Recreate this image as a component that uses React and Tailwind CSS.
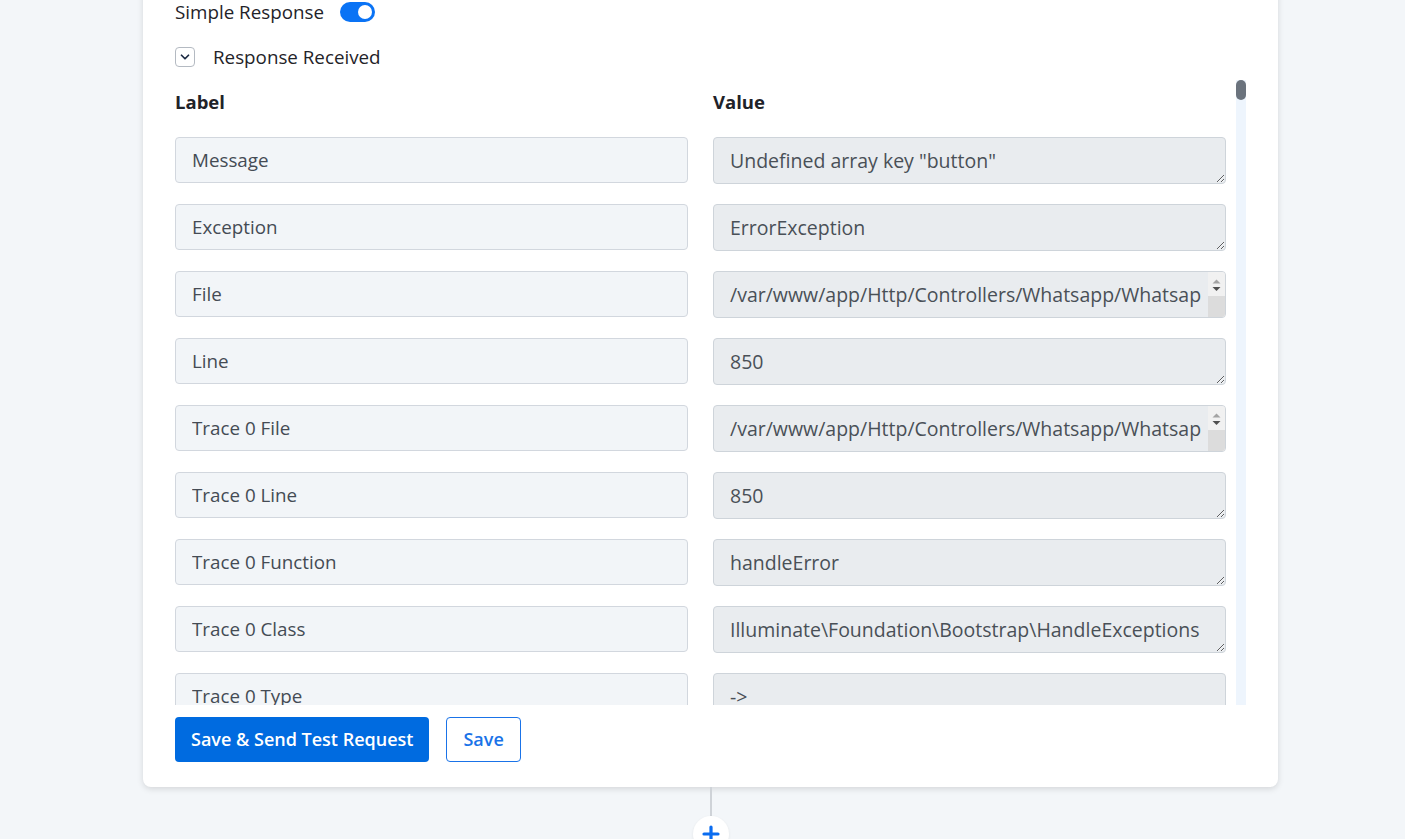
import { ChevronDown } from 'lucide-react'

const FONT = { fontFamily: '"Open Sans", Lato, sans-serif' }

const rows = [
  { label: 'Message', value: 'Undefined array key "button"' },
  { label: 'Exception', value: 'ErrorException' },
  { label: 'File', value: '/var/www/app/Http/Controllers/Whatsapp/WhatsappController.php', long: true },
  { label: 'Line', value: '850' },
  { label: 'Trace 0 File', value: '/var/www/app/Http/Controllers/Whatsapp/WhatsappController.php', long: true },
  { label: 'Trace 0 Line', value: '850' },
  { label: 'Trace 0 Function', value: 'handleError' },
  { label: 'Trace 0 Class', value: 'Illuminate\\Foundation\\Bootstrap\\HandleExceptions' },
  { label: 'Trace 0 Type', value: '->' },
]

function Toggle() {
  return (
    <span className="inline-flex items-center justify-end w-[35px] h-[20px] rounded-full bg-[#0a73f5] px-[3px]">
      <span className="block w-[14px] h-[14px] rounded-full bg-white" />
    </span>
  )
}

// scrollbar of a textarea whose text runs past one line
function AreaScroll() {
  return (
    <div className="absolute right-[1px] top-[1px] bottom-[1px] w-[17px] flex flex-col items-center bg-[#f1f1f1] rounded-r-[3px] overflow-hidden">
      <svg width="17" height="24" viewBox="0 0 17 24" className="shrink-0">
        <path d="M8.5 7.5l4 4h-8z" fill="#a3a3a3" />
        <path d="M8.5 19l4-4h-8z" fill="#505050" />
      </svg>
      <div className="flex-1 w-full bg-[#dcdcdc]" />
    </div>
  )
}

function FieldRow({ label, value, long }) {
  return (
    <div className="grid grid-cols-2 gap-x-[25px] h-[67px] items-start">
      <input
        readOnly
        value={label}
        className="h-[46px] w-full rounded-[4px] border border-[#d2d7de] bg-[#f2f5f8] px-4 text-[18.8px] text-[#444b54] outline-none"
        style={FONT}
      />
      <div className="relative">
        <textarea
          readOnly
          value={value}
          className={
            long
              ? 'block h-[47px] w-full overflow-hidden rounded-[4px] border border-[#ced4da] bg-[#e9ecef] pl-4 pr-[22px] pt-[4px] text-[19.5px] leading-[37px] text-[#495057] outline-none'
              : 'block h-[47px] w-full overflow-hidden rounded-[4px] border border-[#ced4da] bg-[#e9ecef] pl-4 pr-2 pt-[4px] text-[19.5px] leading-[37px] text-[#495057] outline-none'
          }
          style={FONT}
        />
        {long && <AreaScroll />}
      </div>
    </div>
  )
}

export default function App() {
  return (
    <div className="h-[839px] overflow-hidden bg-[#f3f6f9]" style={FONT}>
      <div className="ml-[143px] w-[1135px] -mt-[12px] pt-[12px] rounded-lg bg-white px-8 pb-[25px] shadow-[0_2px_6px_rgba(0,0,0,0.13)]">
        <div className="flex items-center h-6 gap-4">
          <span className="text-[18.8px] text-[#1f2329]">Simple Response</span>
          <Toggle />
        </div>

        <div className="flex items-center h-6 mt-[21px] gap-[18px]">
          <span className="flex items-center justify-center w-5 h-5 rounded-[4px] border border-[#b4bac2] text-[#1c2b44]">
            <ChevronDown size={14} strokeWidth={3} />
          </span>
          <span className="text-[18.8px] text-[#1f2329]">Response Received</span>
        </div>

        <div className="flex mt-[11px] h-[625px] gap-[10px]">
          <div className="flex-1 overflow-hidden">
            <div className="grid grid-cols-2 gap-x-[25px] h-[57px] pt-[8px]">
              <span className="text-[18.5px] font-bold text-[#1f2329]">Label</span>
              <span className="text-[18.5px] font-bold text-[#1f2329]">Value</span>
            </div>
            {rows.map(r => (
              <FieldRow key={r.label} label={r.label} value={r.value} long={r.long} />
            ))}
          </div>
          <div className="w-[10px] bg-[#eef5fd]">
            <div className="h-[20px] w-full rounded-full bg-[#6b737d]" />
          </div>
        </div>

        <div className="flex items-center gap-[17px] mt-[12px]">
          <button className="h-[45px] rounded-[4px] bg-[#006be0] px-4 text-[18px] font-semibold text-white">
            Save &amp; Send Test Request
          </button>
          <button className="h-[45px] rounded-[4px] border border-[#1a73e8] bg-white px-4 text-[18px] font-semibold text-[#1a73e8]">
            Save
          </button>
        </div>
      </div>

      <div className="flex flex-col items-center w-[36px] ml-[693px]">
        <div className="w-[2px] h-[29px] bg-[#cfd3d8]" />
        <div className="flex items-center justify-center w-[36px] h-[36px] rounded-full bg-white shadow-[0_1px_3px_rgba(0,0,0,0.08)]">
          <svg width="18" height="18" viewBox="0 0 18 18">
            <path d="M9 2v14M2 9h14" stroke="#0a6cf0" strokeWidth="3.2" strokeLinecap="round" />
          </svg>
        </div>
      </div>
    </div>
  )
}
